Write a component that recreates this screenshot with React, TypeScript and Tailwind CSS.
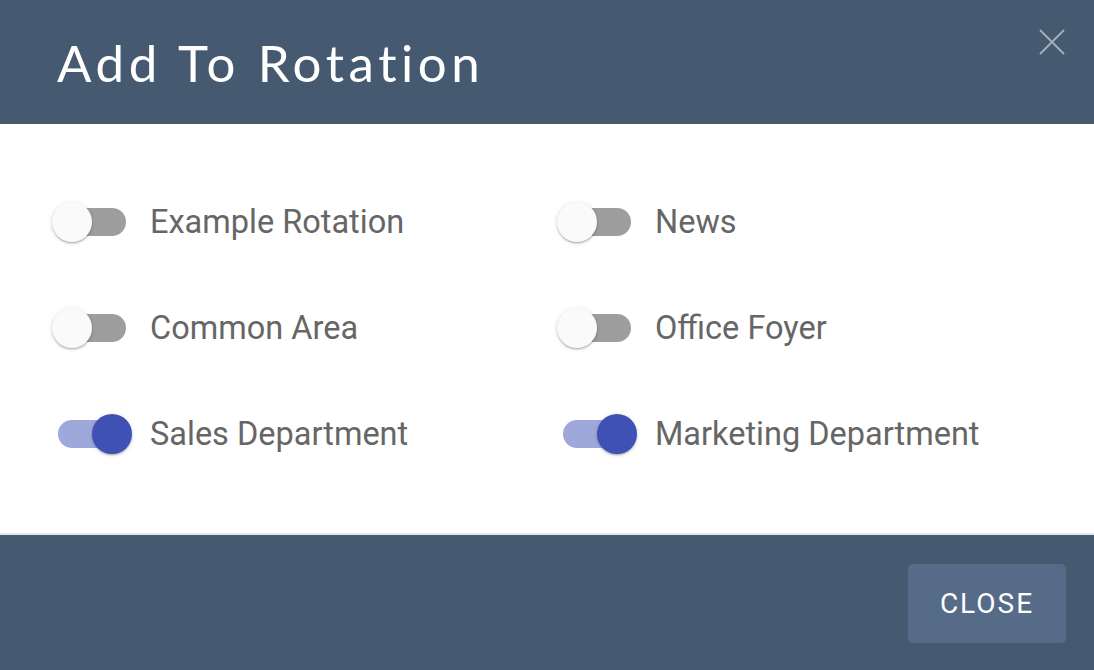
import React from "react";

function Toggle({ on }: { on: boolean }) {
  return (
    <div className="relative w-[80px] h-[40px] shrink-0">
      <div
        className={`absolute left-[6px] top-[6px] w-[68px] h-[28px] rounded-full ${
          on ? "bg-[#9fa8da]" : "bg-[#9e9e9e]"
        }`}
      />
      <div
        className={`absolute top-0 w-[40px] h-[40px] rounded-full shadow-[0_2px_2px_-1px_rgba(0,0,0,0.2),0_1px_2px_0_rgba(0,0,0,0.14),0_1px_5px_0_rgba(0,0,0,0.12)] ${
          on ? "left-[40px] bg-[#3f51b5]" : "left-0 bg-[#fafafa]"
        }`}
      />
    </div>
  );
}

function Item({ label, on }: { label: string; on: boolean }) {
  return (
    <div className="flex items-center h-[40px]">
      <Toggle on={on} />
      <span className="ml-[18px] text-[32.5px] text-[#666666] leading-none" style={{ fontFamily: "Roboto, sans-serif" }}>
        {label}
      </span>
    </div>
  );
}

export default function App() {
  return (
    <div className="w-[1094px] h-[670px] flex flex-col bg-white" style={{ fontFamily: "Roboto, sans-serif" }}>
      <div className="h-[124px] bg-[#455a70] flex items-center pl-[57px] relative shrink-0">
        <h1
          className="text-white text-[51px] font-normal tracking-[4.6px] leading-none"
          style={{ fontFamily: "Lato, 'Noto Sans', sans-serif" }}
        >
          Add To Rotation
        </h1>
        <svg className="absolute right-[28px] top-[28px]" width="28" height="28" viewBox="0 0 28 28">
          <path d="M2 2 L26 26 M26 2 L2 26" stroke="#a3adb8" strokeWidth="2" />
        </svg>
      </div>
      <div className="flex-1 grid grid-cols-[505px_1fr] content-start gap-y-[66px] pl-[52px] pt-[78px]">
        <Item label="Example Rotation" on={false} />
        <Item label="News" on={false} />
        <Item label="Common Area" on={false} />
        <Item label="Office Foyer" on={false} />
        <Item label="Sales Department" on={true} />
        <Item label="Marketing Department" on={true} />
      </div>
      <div className="h-[137px] bg-[#455a70] border-t-[2px] border-[#e3e8ef] flex items-center justify-end pr-[28px] shrink-0">
        <button className="w-[158px] h-[79px] rounded-[5px] bg-[#566b87] text-white text-[28px] font-normal tracking-[2px] mt-[2px]">
          CLOSE
        </button>
      </div>
    </div>
  );
}
